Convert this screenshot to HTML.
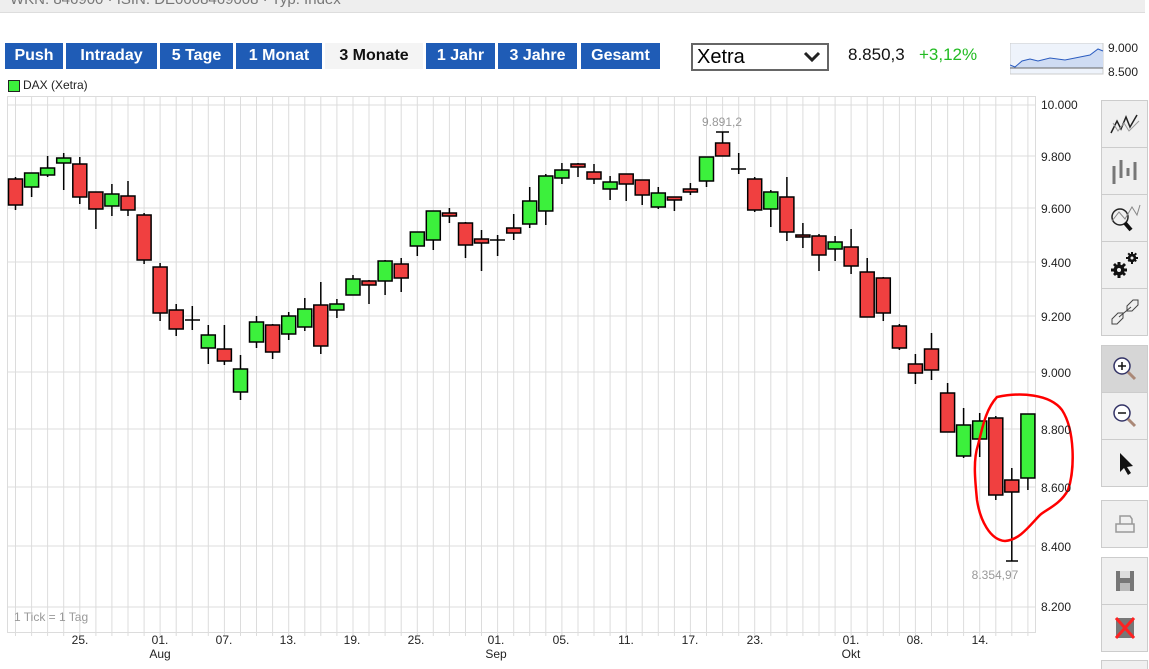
<!DOCTYPE html>
<html><head><meta charset="utf-8"><style>
html,body{margin:0;width:1149px;height:669px;overflow:hidden}
body{background:#fff;font-family:"Liberation Sans",sans-serif;position:relative}
.top{position:absolute;left:0;top:0;width:1145px;height:12px;background:#eeeeee;border-bottom:1px solid #ddd;overflow:hidden}
.top span{position:absolute;left:10px;top:-9px;font-size:15px;color:#777}
.btn{position:absolute;top:43px;height:26px;line-height:26px;background:#1f5cb6;color:#fff;font-weight:bold;font-size:16px;text-align:center}
.btn.a{background:#f4f4f4;color:#111}
.sel{position:absolute;left:691px;top:43px;width:130px;height:24px;border:2px solid #666;font-size:20px;line-height:24px;padding-left:4px;box-sizing:content-box}
.tb{position:absolute;left:1101px;width:45px;background:#f0f0f0;border:1px solid #ccc}
.tb div{height:46px;border-bottom:1px solid #ccc;display:flex;align-items:center;justify-content:center}
.tb div:last-child{border-bottom:none}
</style></head><body>
<div class="top"><span>WKN: 846900 · ISIN: DE0008469008 · Typ: Index</span></div>
<div class="btn" style="left:5px;width:58px">Push</div>
<div class="btn" style="left:66px;width:91px">Intraday</div>
<div class="btn" style="left:160px;width:73px">5 Tage</div>
<div class="btn" style="left:236px;width:86px">1 Monat</div>
<div class="btn a" style="left:325px;width:98px">3 Monate</div>
<div class="btn" style="left:426px;width:69px">1 Jahr</div>
<div class="btn" style="left:498px;width:79px">3 Jahre</div>
<div class="btn" style="left:581px;width:79px">Gesamt</div>
<div class="sel">Xetra<svg style="position:absolute;right:6px;top:6px" width="18" height="12" viewBox="0 0 18 12"><path d="M2 2 L9 9 L16 2" stroke="#222" stroke-width="3" fill="none"/></svg></div>
<div style="position:absolute;left:848px;top:45px;font-size:17px;color:#111">8.850,3</div>
<div style="position:absolute;left:919px;top:45px;font-size:17px;color:#22bb22">+3,12%</div>
<svg style="position:absolute;left:1010px;top:43px" width="140" height="34">
<rect x="0" y="0" width="93" height="31" fill="#eef3fb" stroke="#ccc"/>
<path d="M0 22 L5 24 L12 18 L20 16 L28 18 L40 15 L55 17 L70 14 L80 12 L88 6 L93 8 L93 25 L0 25Z" fill="#cfdcf3"/>
<path d="M0 22 L5 24 L12 18 L20 16 L28 18 L40 15 L55 17 L70 14 L80 12 L88 6 L93 8" stroke="#2b5cc0" fill="none"/>
<line x1="0" y1="25" x2="93" y2="25" stroke="#666"/>
<text x="98" y="9" font-size="12" fill="#222">9.000</text><text x="98" y="33" font-size="12" fill="#222">8.500</text>
</svg>
<div style="position:absolute;left:8px;top:80px;width:10px;height:10px;background:#3cf03c;border:1px solid #222"></div>
<div style="position:absolute;left:23px;top:78px;font-size:12px;color:#222">DAX (Xetra)</div>

<svg style="position:absolute;left:0;top:0" width="1100" height="669" font-family="Liberation Sans,sans-serif">
<g stroke="#dcdcdc" stroke-width="1">
<rect x="7.5" y="96.5" width="1028" height="536" fill="none"/>
<path d="M7 105H1035M7 156H1035M7 208H1035M7 262H1035M7 316H1035M7 372H1035M7 429H1035M7 487H1035M7 546H1035M7 607H1035"/>
<path d="M15.5 96V636M31.6 96V636M47.6 96V636M63.7 96V636M79.8 96V636M95.9 96V636M111.9 96V636M128 96V636M144.1 96V636M160.1 96V636M176.2 96V636M192.3 96V636M208.3 96V636M224.4 96V636M240.5 96V636M256.5 96V636M272.6 96V636M288.7 96V636M304.8 96V636M320.8 96V636M336.9 96V636M353 96V636M369 96V636M385.1 96V636M401.2 96V636M417.3 96V636M433.3 96V636M449.4 96V636M465.5 96V636M481.5 96V636M497.6 96V636M513.7 96V636M529.7 96V636M545.8 96V636M561.9 96V636M578 96V636M594 96V636M610.1 96V636M626.2 96V636M642.2 96V636M658.3 96V636M674.4 96V636M690.4 96V636M706.5 96V636M722.6 96V636M738.7 96V636M754.7 96V636M770.8 96V636M786.9 96V636M802.9 96V636M819 96V636M835.1 96V636M851.1 96V636M867.2 96V636M883.3 96V636M899.4 96V636M915.4 96V636M931.5 96V636M947.6 96V636M963.6 96V636M979.7 96V636M995.8 96V636M1011.8 96V636M1027.9 96V636"/>
</g>
<g stroke="#000" stroke-width="1.5">
<path d="M15.5 177V210M31.6 173V197M47.6 156V177M63.7 153V190M79.8 157V204M95.9 192V229M111.9 184V216M128 181V216M144.1 213V264M160.1 263V321M176.2 304V336M192.3 306V330M208.3 325V364M224.4 325V365M240.5 355V400M256.5 316V348M272.6 324V359M288.7 312V340M304.8 298V331M320.8 282V354M336.9 299V318M353 275V295M369 280V304M385.1 260V295M401.2 258V292M417.3 232V256M433.3 211V250M449.4 208V223M465.5 222V258M481.5 230V271M497.6 235V256M513.7 214V240M529.7 187V228M545.8 174V225M561.9 163V184M578 163V177M594 164V184M610.1 176V200M626.2 174V201M642.2 180V205M658.3 187V209M674.4 197V211M690.4 183V195M706.5 157V187M722.6 132V156M738.7 153V174M754.7 177V212M770.8 190V227M786.9 177V241M802.9 223V248M819 234V271M835.1 236V261M851.1 229V274M867.2 258V317M883.3 277V321M899.4 324V350M915.4 354V384M931.5 333V380M947.6 383V432M963.6 408V458M979.7 413V457M995.8 416V500M1011.8 468V561"/>
<path d="M185 320H200M490 240H505M731 169H746M716 132H729M1006 561H1018M1027.9 478V490" />
</g>
<g stroke="#000" stroke-width="1.5">
<g fill="#f04040">
<rect x="8.5" y="179" width="14" height="26"/><rect x="72.8" y="164" width="14" height="33"/><rect x="88.9" y="192" width="14" height="17"/><rect x="121" y="196" width="14" height="14"/><rect x="137.1" y="215" width="14" height="45"/><rect x="153.1" y="267" width="14" height="46"/><rect x="169.2" y="310" width="14" height="19"/><rect x="217.4" y="349" width="14" height="12"/><rect x="265.6" y="325" width="14" height="27"/><rect x="313.8" y="305" width="14" height="41"/><rect x="362" y="281" width="14" height="4"/><rect x="394.2" y="264" width="14" height="14"/><rect x="442.4" y="213" width="14" height="3"/><rect x="458.5" y="223" width="14" height="22"/><rect x="474.5" y="239" width="14" height="4"/><rect x="506.7" y="228" width="14" height="5"/><rect x="571" y="164" width="14" height="3"/><rect x="587" y="172" width="14" height="7"/><rect x="619.2" y="174" width="14" height="10"/><rect x="635.2" y="180" width="14" height="15"/><rect x="667.4" y="197" width="14" height="3"/><rect x="683.4" y="189" width="14" height="3"/><rect x="715.6" y="143" width="14" height="13"/><rect x="747.7" y="179" width="14" height="31"/><rect x="779.9" y="197" width="14" height="35"/><rect x="795.9" y="235" width="14" height="2"/><rect x="812" y="236" width="14" height="19"/><rect x="844.1" y="247" width="14" height="19"/><rect x="860.2" y="272" width="14" height="45"/><rect x="876.3" y="278" width="14" height="35"/><rect x="892.4" y="326" width="14" height="22"/><rect x="908.4" y="364" width="14" height="9"/><rect x="924.5" y="349" width="14" height="21"/><rect x="940.6" y="393" width="14" height="39"/><rect x="988.8" y="418" width="14" height="77"/><rect x="1004.8" y="480" width="14" height="12"/>
</g>
<g fill="#3cf03c">
<rect x="24.6" y="173" width="14" height="14"/><rect x="40.6" y="168" width="14" height="7"/><rect x="56.7" y="158" width="14" height="5"/><rect x="104.9" y="194" width="14" height="12"/><rect x="201.3" y="335" width="14" height="13"/><rect x="233.5" y="369" width="14" height="23"/><rect x="249.5" y="322" width="14" height="20"/><rect x="281.7" y="316" width="14" height="18"/><rect x="297.8" y="309" width="14" height="18"/><rect x="329.9" y="304" width="14" height="6"/><rect x="346" y="279" width="14" height="16"/><rect x="378.1" y="261" width="14" height="20"/><rect x="410.3" y="232" width="14" height="14"/><rect x="426.3" y="211" width="14" height="29"/><rect x="522.7" y="201" width="14" height="23"/><rect x="538.8" y="176" width="14" height="35"/><rect x="554.9" y="170" width="14" height="8"/><rect x="603.1" y="182" width="14" height="7"/><rect x="651.3" y="193" width="14" height="14"/><rect x="699.5" y="157" width="14" height="24"/><rect x="763.8" y="192" width="14" height="17"/><rect x="828.1" y="242" width="14" height="7"/><rect x="956.6" y="425" width="14" height="31"/><rect x="972.7" y="421" width="14" height="18"/><rect x="1020.9" y="414" width="14" height="64"/>
</g>
</g>
<path d="M997 397 C1020 392,1050 394,1062 410 C1075 430,1075 470,1068 490 C1060 505,1045 510,1040 515 C1030 525,1020 540,1005 541 C990 540,980 520,977 500 C975 480,973 460,978 445 C982 430,985 410,997 397Z" fill="none" stroke="#f00" stroke-width="2.5"/>
<g font-size="12" fill="#222">
<text x="1041" y="109">10.000</text><text x="1041" y="161">9.800</text><text x="1041" y="213">9.600</text><text x="1041" y="267">9.400</text><text x="1041" y="321">9.200</text><text x="1041" y="377">9.000</text><text x="1041" y="434">8.800</text><text x="1041" y="492">8.600</text><text x="1041" y="551">8.400</text><text x="1041" y="611">8.200</text>
</g>
<g font-size="12" fill="#999"><text x="722" y="126" text-anchor="middle">9.891,2</text><text x="995" y="579" text-anchor="middle">8.354,97</text><text x="14" y="621">1 Tick = 1 Tag</text></g>
<g font-size="12" fill="#222" text-anchor="middle">
<text x="80" y="644">25.</text><text x="160" y="644">01.</text><text x="224" y="644">07.</text><text x="288" y="644">13.</text><text x="352" y="644">19.</text><text x="416" y="644">25.</text><text x="496" y="644">01.</text><text x="561" y="644">05.</text><text x="626" y="644">11.</text><text x="690" y="644">17.</text><text x="755" y="644">23.</text><text x="851" y="644">01.</text><text x="915" y="644">08.</text><text x="980" y="644">14.</text>
<text x="160" y="658">Aug</text><text x="496" y="658">Sep</text><text x="851" y="658">Okt</text>
</g>
</svg>

<div class="tb" style="top:100px">
<div><svg width="34" height="26"><path d="M3 22 L9 10 L13 18 L18 6 L22 16 L29 4" stroke="#222" stroke-width="1.5" fill="none"/><path d="M5 12 L10 20 L16 12 L21 20 L31 10" stroke="#999" fill="none"/></svg></div>
<div><svg width="34" height="30"><path d="M6 10V28M13 4V22M20 12V20M27 6V24" stroke="#777" stroke-width="3"/></svg></div>
<div><svg width="34" height="30"><circle cx="12" cy="14" r="8" stroke="#222" stroke-width="1.5" fill="none"/><path d="M17 20 L23 27" stroke="#111" stroke-width="4"/><path d="M4 18 L11 9 L17 16 L24 4 L29 12 L32 2" stroke="#888" fill="none"/></svg></div>
<div><svg width="34" height="32"><g fill="#111"><circle cx="11" cy="21" r="5.5"/><path d="M9.5 13h3v16h-3zM3 19.5h16v3H3zM5 16l2-2 11 11-2 2zM16 14l2 2-11 11-2-2z"/><circle cx="24" cy="9" r="4.2"/><path d="M23 3h2v12h-2zM18 8h12v2H18zM19.5 5l1.4-1.4 8 8-1.4 1.4zM27.6 3.6l1.4 1.4-8 8-1.4-1.4z"/></g><circle cx="11" cy="21" r="2" fill="#f0f0f0"/><circle cx="24" cy="9" r="1.5" fill="#f0f0f0"/></svg></div>
<div><svg width="34" height="30"><path d="M4 22 L10 16 L15 16 L15 21 L9 27 L4 27Z M30 8 L24 14 L19 14 L19 9 L25 3 L30 3Z M11 20 L23 10" stroke="#444" fill="none"/></svg></div>
</div>
<div class="tb" style="top:345px">
<div style="background:#d6d6d6"><svg width="30" height="30"><circle cx="12" cy="12" r="8" fill="#fff" stroke="#336" stroke-width="1.5"/><path d="M8 12H16M12 8V16" stroke="#111" stroke-width="1.5"/><path d="M18 18L25 25" stroke="#a87" stroke-width="3"/></svg></div>
<div><svg width="30" height="30"><circle cx="12" cy="12" r="8" fill="#fff" stroke="#336" stroke-width="1.5"/><path d="M8 12H16" stroke="#111" stroke-width="1.5"/><path d="M18 18L25 25" stroke="#a87" stroke-width="3"/></svg></div>
<div><svg width="30" height="30"><path d="M10 5 L10 24 L14 20 L18 27 L21 25 L17 19 L23 18Z" fill="#111"/></svg></div>
</div>
<div class="tb" style="top:500px"><div><svg width="30" height="30"><path d="M6 15H24V23H6Z M10 15V7H20L22 10V15" fill="none" stroke="#999" stroke-width="1.5"/></svg></div></div>
<div class="tb" style="top:557px">
<div><svg width="30" height="30"><rect x="6" y="5" width="18" height="20" fill="#777"/><rect x="10" y="5" width="10" height="7" fill="#ddd"/><rect x="10" y="17" width="10" height="8" fill="#bbb"/></svg></div>
<div><svg width="30" height="30"><rect x="6" y="5" width="18" height="20" fill="#777"/><path d="M6 5L24 25M24 5L6 25" stroke="#f22" stroke-width="3"/></svg></div>
</div>
<div class="tb" style="top:660px;height:20px"></div>
</body></html>
